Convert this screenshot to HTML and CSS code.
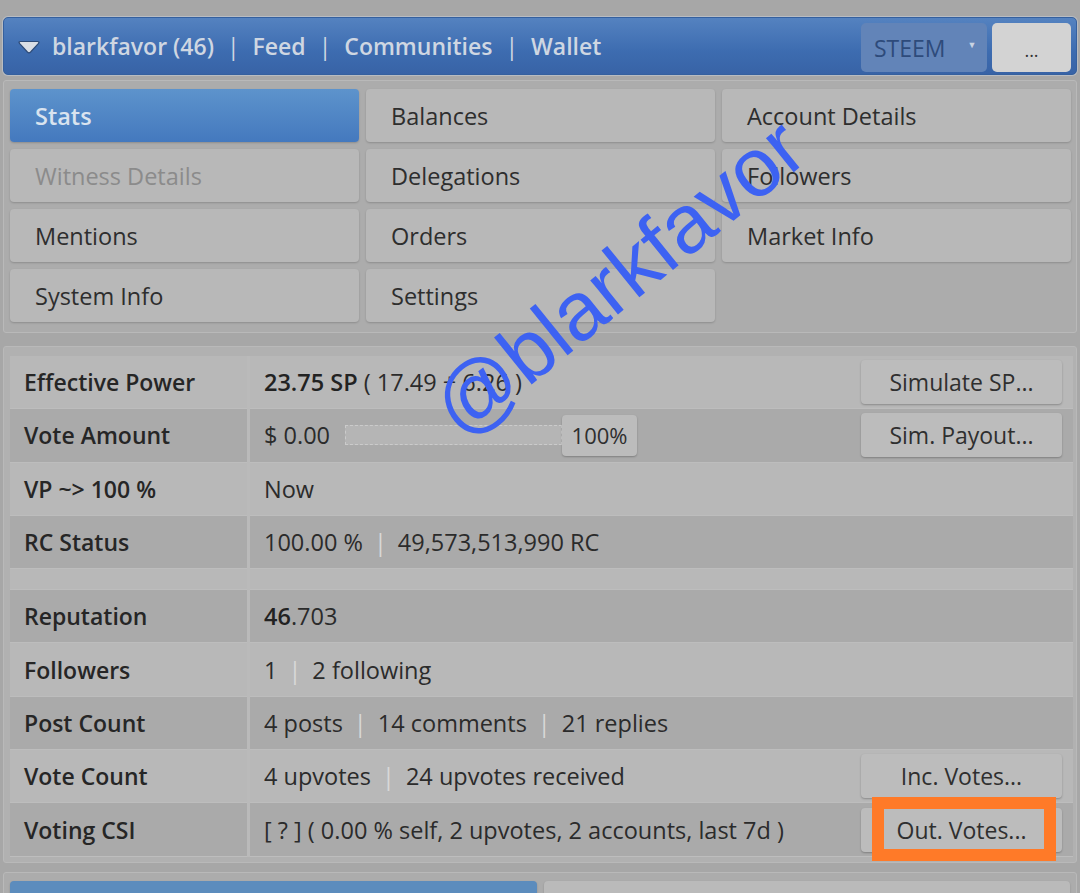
FILE: index.html
```html
<!DOCTYPE html>
<html lang="en">
<head>
    <meta charset="UTF-8">
    <meta name="viewport" content="width=device-width, initial-scale=1.0">
    <title>blarkfavor - Stats</title>
    <link rel="stylesheet" href="styles.css">
</head>
<body>
<div id="page">
    <!-- 顶部导航 -->
    <div id="topbar">
        <svg class="caret" width="24" height="14" viewBox="0 0 24 14">
            <path d="M3.5 1.5 H20.5 Q23 1.5 21.3 3.6 L13.6 12 Q12 13.6 10.4 12 L2.7 3.6 Q1 1.5 3.5 1.5 Z" fill="#d9dee5" stroke="#2d4b78" stroke-width="1.2"/>
        </svg>
        <div class="nav">
            <a>blarkfavor (46)</a><span class="nav-sep">|</span>
            <a>Feed</a><span class="nav-sep">|</span>
            <a>Communities</a><span class="nav-sep">|</span>
            <a>Wallet</a>
        </div>
        <div class="tools">
            <div class="coin">STEEM <span class="coin-arrow">&#9660;</span></div>
            <button class="more">...</button>
        </div>
    </div>

    <!-- 功能标签 -->
    <div class="panel" id="tabs">
        <div class="tab active">Stats</div>
        <div class="tab">Balances</div>
        <div class="tab">Account Details</div>
        <div class="tab disabled">Witness Details</div>
        <div class="tab">Delegations</div>
        <div class="tab">Followers</div>
        <div class="tab">Mentions</div>
        <div class="tab">Orders</div>
        <div class="tab">Market Info</div>
        <div class="tab">System Info</div>
        <div class="tab">Settings</div>
    </div>

    <!-- 统计表 -->
    <div class="panel" id="stats">
        <table>
            <tr>
                <td class="label">Effective Power</td>
                <td><div class="cell"><span><b>23.75 SP</b> ( 17.49 + 6.26 )</span><button class="btn">Simulate SP...</button></div></td>
            </tr>
            <tr>
                <td class="label">Vote Amount</td>
                <td><div class="cell">
                    <span class="vote-amount">$ 0.00 <span class="track"></span><button class="pct">100%</button></span>
                    <button class="btn">Sim. Payout...</button>
                </div></td>
            </tr>
            <tr>
                <td class="label">VP ~&gt; 100 %</td>
                <td><div class="cell">Now</div></td>
            </tr>
            <tr>
                <td class="label">RC Status</td>
                <td><div class="cell"><span>100.00 %<span class="sep">|</span>49,573,513,990 RC</span></div></td>
            </tr>
            <tr class="blank">
                <td class="label"></td>
                <td></td>
            </tr>
            <tr>
                <td class="label">Reputation</td>
                <td><div class="cell"><span><b>46</b>.703</span></div></td>
            </tr>
            <tr>
                <td class="label">Followers</td>
                <td><div class="cell"><span>1<span class="sep">|</span>2 following</span></div></td>
            </tr>
            <tr>
                <td class="label">Post Count</td>
                <td><div class="cell"><span>4 posts<span class="sep">|</span>14 comments<span class="sep">|</span>21 replies</span></div></td>
            </tr>
            <tr>
                <td class="label">Vote Count</td>
                <td><div class="cell"><span>4 upvotes<span class="sep">|</span>24 upvotes received</span><button class="btn">Inc. Votes...</button></div></td>
            </tr>
            <tr>
                <td class="label">Voting CSI</td>
                <td><div class="cell"><span>[ ? ] ( 0.00 % self, 2 upvotes, 2 accounts, last 7d )</span><button class="btn">Out. Votes...</button></div></td>
            </tr>
        </table>
    </div>

    <div class="panel" id="next">
        <div class="tab active"></div>
        <div class="tab"></div>
    </div>
</div>

<!-- 水印和标注 -->
<div class="watermark">@blarkfavor</div>
<div class="highlight"></div>
</body>
</html>
```

FILE: styles.css
```css
body {
    margin: 0;
    height: 893px;
    overflow: hidden;
    background: #a7a7a7;
    font-family: 'Open Sans', 'Noto Sans', sans-serif;
    font-size: 23.5px;
    color: #2b2b2b;
    position: relative;
}
#page {
    padding: 17px 3px 0 3px;
}
#topbar {
    height: 58px;
    box-sizing: border-box;
    display: flex;
    align-items: center;
    padding: 0 5px 0 13px;
    border-radius: 5px;
    border: 1px solid #35609e;
    background: linear-gradient(#5482c0, #3d6cb0 60%, #3863a6);
    box-shadow: 0 0 0 1px #b8bcc2;
}
.caret {
    margin-right: 11px;
    margin-top: 2px;
}
.nav {
    display: flex;
    align-items: center;
    font-size: 23px;
    font-weight: 600;
    color: #cfd7e2;
}
.nav-sep {
    margin: 0 13px;
    font-weight: 400;
}
.tools {
    margin-left: auto;
    display: flex;
    gap: 5px;
    align-items: center;
    height: 49px;
    margin-top: 3px;
}
.coin {
    width: 126px;
    height: 49px;
    box-sizing: border-box;
    padding-left: 13px;
    display: flex;
    align-items: center;
    border-radius: 5px;
    background: #6284b8;
    color: #2e4b7b;
    font-size: 23px;
}
.coin-arrow {
    font-size: 9px;
    color: #c9d3e2;
    margin-left: 22px;
    margin-top: -6px;
}
.more {
    width: 79px;
    height: 49px;
    border: none;
    border-radius: 5px;
    background: #d3d3d3;
    color: #333;
    font-family: inherit;
    font-size: 18px;
    padding-top: 6px;
}
.panel {
    background: #acacac;
    border: 1px solid #b9b9b9;
    border-radius: 3px;
}
#tabs {
    margin-top: 5px;
    display: grid;
    grid-template-columns: repeat(3, 1fr);
    gap: 7px;
    padding: 8px 5px 10px 6px;
}
.tab {
    height: 53px;
    box-sizing: border-box;
    display: flex;
    align-items: center;
    padding-left: 25px;
    border-radius: 4px;
    background: #b8b8b8;
    box-shadow: 0 1px 2px rgba(0, 0, 0, 0.18);
    color: #2e2e2e;
}
.tab.active {
    background: linear-gradient(#5d93cc, #4479be);
    color: #d9e3ef;
    font-weight: 600;
}
.tab.disabled {
    color: #8b8b8b;
}
#stats {
    margin-top: 13px;
    padding: 9px 3px 5px 6px;
    background: #b1b1b1;
}
table {
    width: 100%;
    border-collapse: collapse;
}
td {
    height: 52.3px;
    padding: 0;
    border-bottom: 1px solid #bdbdbd;
}
tr:nth-child(odd) td {
    background: #b8b8b8;
}
tr:nth-child(even) td {
    background: #aaaaaa;
}
tr.blank td {
    height: 20px;
}
.label {
    width: 223px;
    padding-left: 14px;
    font-weight: 600;
    font-size: 23px;
    color: #262626;
    border-right: 3px solid #bababa;
}
.cell {
    display: flex;
    align-items: center;
    justify-content: space-between;
    padding-left: 14px;
    padding-right: 11px;
}
.cell b {
    font-weight: 600;
    color: #222;
}
.sep {
    color: #d8d8d8;
    margin: 0 11px;
}
.btn {
    width: 201px;
    height: 44px;
    border: none;
    border-radius: 4px;
    background: #bcbcbc;
    box-shadow: 0 1px 2px rgba(0, 0, 0, 0.25);
    color: #2f2f2f;
    font-family: inherit;
    font-size: 23px;
}
.vote-amount {
    display: flex;
    align-items: center;
}
.track {
    width: 215px;
    height: 18px;
    margin-left: 15px;
    border: 1px dashed #cbcbcb;
    background: #b5b5b5;
}
.pct {
    width: 75px;
    height: 41px;
    border: none;
    border-radius: 4px;
    background: #bcbcbc;
    box-shadow: 0 1px 2px rgba(0, 0, 0, 0.25);
    color: #2f2f2f;
    font-family: inherit;
    font-size: 22px;
}
#next {
    margin-top: 9px;
    display: grid;
    grid-template-columns: 1fr 1fr;
    gap: 7px;
    padding: 8px 6px 0 6px;
}
#next .tab.active {
    background: #5c8cbd;
}
#next .tab {
    background: #bababa;
}
.watermark {
    position: absolute;
    left: 394px;
    top: 236px;
    font-family: 'Liberation Sans', Arial, sans-serif;
    font-size: 83px;
    line-height: 1;
    color: #3d62f2;
    transform: rotate(-39deg);
    white-space: nowrap;
}
.highlight {
    position: absolute;
    left: 872px;
    top: 797px;
    width: 160px;
    height: 40px;
    border: 12px solid #ff7a28;
}
```
